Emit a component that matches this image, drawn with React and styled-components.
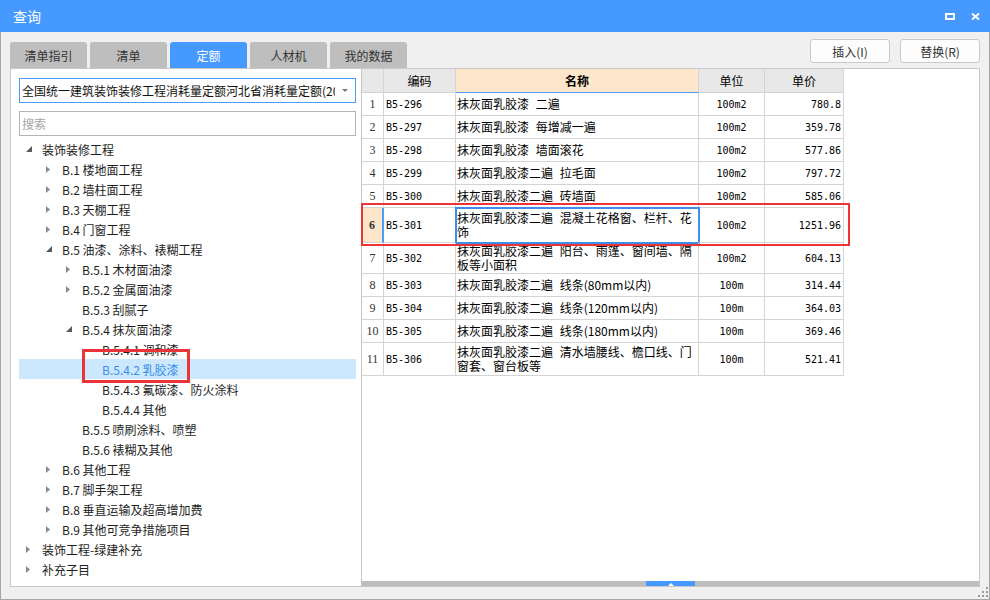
import React from 'react';
import styled, { createGlobalStyle, css } from 'styled-components';

const GlobalStyle = createGlobalStyle`
  html, body { margin: 0; padding: 0; background: #ffffff; }
  body {
    font-family: "Noto Sans CJK SC", "Microsoft YaHei", sans-serif;
    font-size: 12px;
    color: #1e1e1e;
  }
  * { box-sizing: border-box; }
`;

const CJK = `"Noto Sans CJK SC", "Microsoft YaHei", sans-serif`;
const MONO = `"DejaVu Sans Mono", "Noto Sans CJK SC", monospace`;

const Window = styled.div`
  position: relative;
  width: 990px;
  height: 600px;
  display: flex;
  flex-direction: column;
  background: #f0f0f0;
  overflow: hidden;
`;

const TitleBar = styled.div`
  flex: none;
  height: 32px;
  background: #4599ff;
  display: flex;
  align-items: center;
  padding: 0 10px 0 13px;
  color: #ffffff;
`;

const Title = styled.div`
  flex: 1;
  font-size: 14px;
  line-height: 16px;
`;

const WinButtons = styled.div`
  display: flex;
  align-items: center;
  gap: 16px;
`;

const Body = styled.div`
  flex: 1;
  min-height: 0;
  display: flex;
  flex-direction: column;
  border: 1px solid #a6a6a6;
  border-top: none;
  padding: 0 9px 12px 9px;
`;

const TopRow = styled.div`
  flex: none;
  height: 36px;
  display: flex;
  align-items: flex-start;
`;

const Tabs = styled.div`
  display: flex;
  gap: 3px;
  margin-top: 10px;
`;

const Tab = styled.div`
  width: 77px;
  height: 26px;
  border-radius: 3px 3px 0 0;
  display: flex;
  align-items: center;
  justify-content: center;
  font-size: 12px;
  background: ${(p) => (p.$active ? '#4599ff' : '#bebebe')};
  color: ${(p) => (p.$active ? '#ffffff' : '#333333')};
`;

const Actions = styled.div`
  margin-left: auto;
  margin-top: 7px;
  display: flex;
  gap: 10px;
`;

const Button = styled.div`
  width: 80px;
  height: 24px;
  border: 1px solid #c9c9c9;
  border-radius: 3px;
  background: #fdfdfd;
  display: flex;
  align-items: center;
  justify-content: center;
  font-size: 12px;
  color: #333333;
`;

const Main = styled.div`
  flex: 1;
  min-height: 0;
  display: flex;
`;

const LeftPanel = styled.div`
  flex: none;
  width: 352px;
  background: #ffffff;
  border: 1px solid #c8c8c8;
  padding: 9px 5px 0 8px;
  display: flex;
  flex-direction: column;
`;

const Select = styled.div`
  height: 25px;
  border: 1px solid #4a9cf6;
  display: flex;
  align-items: center;
  padding-left: 2px;
  margin-bottom: 8px;
`;

const SelectText = styled.div`
  flex: 1;
  overflow: hidden;
  white-space: nowrap;
  font-size: 12px;
  color: #111111;
  max-width: 314px;
`;

const SelectArrow = styled.div`
  width: 20px;
  display: flex;
  justify-content: center;
  margin-left: auto;
`;

const Search = styled.div`
  height: 25px;
  border: 1px solid #b4b4b4;
  display: flex;
  align-items: center;
  padding-left: 2px;
  color: #a6a6a6;
  font-size: 12px;
  margin-bottom: 3px;
`;

const Tree = styled.div`
  display: flex;
  flex-direction: column;
`;

const TreeRow = styled.div`
  height: 20px;
  display: flex;
  align-items: center;
  padding-left: ${(p) => p.$level * 20}px;
  background: ${(p) => (p.$selected ? '#cce8ff' : 'transparent')};
  color: ${(p) => (p.$selected ? '#3a8ee6' : '#1e1e1e')};
  font-size: 12px;
  white-space: nowrap;
`;

const Toggle = styled.div`
  width: 23px;
  height: 20px;
  flex: none;
  display: flex;
  align-items: center;
  padding-left: 7px;
`;

const RightPanel = styled.div`
  flex: 1;
  min-width: 0;
  background: #ffffff;
  border: 1px solid #c8c8c8;
  border-left: none;
  display: flex;
  flex-direction: column;
`;

const Grid = styled.div`
  display: flex;
  flex-direction: column;
  width: 482px;
`;

const GridRow = styled.div`
  display: grid;
  grid-template-columns: 22px 72px 243px 66px 79px;
  height: ${(p) => p.$h}px;
`;

const Cell = styled.div`
  border-right: 1px solid #d4d4d4;
  border-bottom: 1px solid #d4d4d4;
  display: flex;
  align-items: center;
  overflow: hidden;
  color: #000000;
`;

const HeadCell = styled(Cell)`
  justify-content: center;
  background: ${(p) => (p.$current ? '#fde6c9' : '#e8e8e8')};
  font-weight: ${(p) => (p.$current ? 700 : 400)};
  font-family: ${CJK};
  font-size: 12px;
  ${(p) =>
    p.$current &&
    css`
      border-bottom-color: #4a9cf6;
    `}
`;

const NumCell = styled(Cell)`
  justify-content: center;
  font-family: "Liberation Serif", serif;
  font-size: 12px;
  color: #333333;
  background: ${(p) => (p.$current ? '#fde6c9' : '#ffffff')};
  font-weight: ${(p) => (p.$current ? 700 : 400)};
  ${(p) =>
    p.$current &&
    css`
      border-right: 2px solid #4a9cf6;
    `}
`;

const CodeCell = styled(Cell)`
  padding-left: 2px;
  font-family: ${MONO};
  font-size: 10px;
`;

const NameCell = styled(Cell)`
  padding-left: 1px;
  font-family: ${CJK};
  font-size: 12px;
  line-height: 14px;
  word-spacing: 4px;
  ${(p) =>
    p.$selected &&
    css`
      outline: 2px solid #3d8ee6;
      outline-offset: -1px;
    `}
`;

const UnitCell = styled(Cell)`
  justify-content: center;
  font-family: ${MONO};
  font-size: 10px;
`;

const PriceCell = styled(Cell)`
  justify-content: flex-end;
  padding-right: 2px;
  font-family: ${MONO};
  font-size: 10px;
`;

const Filler = styled.div`
  flex: 1;
`;

const Splitter = styled.div`
  flex: none;
  height: 5px;
  background: #bdbdbd;
  display: flex;
  padding-left: 284px;
`;

const SplitThumb = styled.div`
  width: 49px;
  height: 5px;
  background: #4599ff;
  display: flex;
  align-items: flex-end;
  justify-content: center;
`;

const Annot = styled.div`
  position: absolute;
  left: ${(p) => p.$x}px;
  top: ${(p) => p.$y}px;
  width: ${(p) => p.$w}px;
  height: ${(p) => p.$h}px;
  border: ${(p) => p.$t}px solid #ec3338;
  pointer-events: none;
`;

const Grip = styled.svg`
  position: absolute;
  right: 2px;
  bottom: 3px;
`;

const tabs = ['清单指引', '清单', '定额', '人材机', '我的数据'];

const tree = [
  { level: 0, state: 'open', label: '装饰装修工程' },
  { level: 1, state: 'closed', label: 'B.1 楼地面工程' },
  { level: 1, state: 'closed', label: 'B.2 墙柱面工程' },
  { level: 1, state: 'closed', label: 'B.3 天棚工程' },
  { level: 1, state: 'closed', label: 'B.4 门窗工程' },
  { level: 1, state: 'open', label: 'B.5 油漆、涂料、裱糊工程' },
  { level: 2, state: 'closed', label: 'B.5.1 木材面油漆' },
  { level: 2, state: 'closed', label: 'B.5.2 金属面油漆' },
  { level: 2, state: 'leaf', label: 'B.5.3 刮腻子' },
  { level: 2, state: 'open', label: 'B.5.4 抹灰面油漆' },
  { level: 3, state: 'leaf', label: 'B.5.4.1 调和漆' },
  { level: 3, state: 'leaf', label: 'B.5.4.2 乳胶漆', selected: true },
  { level: 3, state: 'leaf', label: 'B.5.4.3 氟碳漆、防火涂料' },
  { level: 3, state: 'leaf', label: 'B.5.4.4 其他' },
  { level: 2, state: 'leaf', label: 'B.5.5 喷刷涂料、喷塑' },
  { level: 2, state: 'leaf', label: 'B.5.6 裱糊及其他' },
  { level: 1, state: 'closed', label: 'B.6 其他工程' },
  { level: 1, state: 'closed', label: 'B.7 脚手架工程' },
  { level: 1, state: 'closed', label: 'B.8 垂直运输及超高增加费' },
  { level: 1, state: 'closed', label: 'B.9 其他可竞争措施项目' },
  { level: 0, state: 'closed', label: '装饰工程-绿建补充' },
  { level: 0, state: 'closed', label: '补充子目' },
];

const rows = [
  ['1', 'B5-296', '抹灰面乳胶漆 二遍', '100m2', '780.8', 23],
  ['2', 'B5-297', '抹灰面乳胶漆 每增减一遍', '100m2', '359.78', 23],
  ['3', 'B5-298', '抹灰面乳胶漆 墙面滚花', '100m2', '577.86', 23],
  ['4', 'B5-299', '抹灰面乳胶漆二遍 拉毛面', '100m2', '797.72', 23],
  ['5', 'B5-300', '抹灰面乳胶漆二遍 砖墙面', '100m2', '585.06', 23],
  ['6', 'B5-301', '抹灰面乳胶漆二遍 混凝土花格窗、栏杆、花饰', '100m2', '1251.96', 35],
  ['7', 'B5-302', '抹灰面乳胶漆二遍 阳台、雨篷、窗间墙、隔板等小面积', '100m2', '604.13', 31],
  ['8', 'B5-303', '抹灰面乳胶漆二遍 线条(80mm以内)', '100m', '314.44', 23],
  ['9', 'B5-304', '抹灰面乳胶漆二遍 线条(120mm以内)', '100m', '364.03', 23],
  ['10', 'B5-305', '抹灰面乳胶漆二遍 线条(180mm以内)', '100m', '369.46', 23],
  ['11', 'B5-306', '抹灰面乳胶漆二遍 清水墙腰线、檐口线、门窗套、窗台板等', '100m', '521.41', 33],
];

function ToggleIcon({ state }) {
  if (state === 'open') {
    return (
      <svg width="6" height="6" viewBox="0 0 6 6">
        <polygon points="6,0 6,6 0,6" fill="#5a5a5a" />
      </svg>
    );
  }
  if (state === 'closed') {
    return (
      <svg width="4" height="7" viewBox="0 0 4 7">
        <polygon points="0,0 4,3.5 0,7" fill="#8a8a8a" />
      </svg>
    );
  }
  return null;
}

export default function App() {
  return (
    <>
      <GlobalStyle />
      <Window>
        <TitleBar>
          <Title>查询</Title>
          <WinButtons>
            <svg width="10" height="7" viewBox="0 0 10 7">
              <rect x="1" y="1" width="8" height="5" fill="none" stroke="#ffffff" strokeWidth="2" />
            </svg>
            <svg width="9" height="7" viewBox="0 0 9 7">
              <path d="M1 0.5 L8 6.5 M8 0.5 L1 6.5" stroke="#ffffff" strokeWidth="2" />
            </svg>
          </WinButtons>
        </TitleBar>
        <Body>
          <TopRow>
            <Tabs>
              {tabs.map((t) => (
                <Tab key={t} $active={t === '定额'}>
                  {t}
                </Tab>
              ))}
            </Tabs>
            <Actions>
              <Button>插入(I)</Button>
              <Button>替换(R)</Button>
            </Actions>
          </TopRow>
          <Main>
            <LeftPanel>
              <Select>
                <SelectText>全国统一建筑装饰装修工程消耗量定额河北省消耗量定额(2012)</SelectText>
                <SelectArrow>
                  <svg width="6" height="3" viewBox="0 0 6 3">
                    <polygon points="0,0 6,0 3,3" fill="#7a7a7a" />
                  </svg>
                </SelectArrow>
              </Select>
              <Search>搜索</Search>
              <Tree>
                {tree.map((n) => (
                  <TreeRow key={n.label} $level={n.level} $selected={n.selected}>
                    <Toggle>
                      <ToggleIcon state={n.state} />
                    </Toggle>
                    {n.label}
                  </TreeRow>
                ))}
              </Tree>
            </LeftPanel>
            <RightPanel>
              <Grid>
                <GridRow $h={24}>
                  <HeadCell />
                  <HeadCell>编码</HeadCell>
                  <HeadCell $current>名称</HeadCell>
                  <HeadCell>单位</HeadCell>
                  <HeadCell>单价</HeadCell>
                </GridRow>
                {rows.map((r) => {
                  const cur = r[0] === '6';
                  return (
                    <GridRow key={r[0]} $h={r[5]}>
                      <NumCell $current={cur}>{r[0]}</NumCell>
                      <CodeCell>{r[1]}</CodeCell>
                      <NameCell $selected={cur}>{r[2]}</NameCell>
                      <UnitCell>{r[3]}</UnitCell>
                      <PriceCell>{r[4]}</PriceCell>
                    </GridRow>
                  );
                })}
              </Grid>
              <Filler />
              <Splitter>
                <SplitThumb>
                  <svg width="6" height="3" viewBox="0 0 6 3">
                    <polygon points="0,3 6,3 3,0" fill="#ffffff" />
                  </svg>
                </SplitThumb>
              </Splitter>
            </RightPanel>
          </Main>
        </Body>
        <Annot $x={361} $y={203} $w={489} $h={43} $t={2} />
        <Annot $x={82} $y={349} $w={108} $h={34} $t={3} />
        <Grip width="10" height="10" viewBox="0 0 10 10">
          <rect x="8" y="0" width="2" height="2" fill="#9a9a9a" />
          <rect x="4" y="4" width="2" height="2" fill="#9a9a9a" />
          <rect x="8" y="4" width="2" height="2" fill="#9a9a9a" />
          <rect x="0" y="8" width="2" height="2" fill="#9a9a9a" />
          <rect x="4" y="8" width="2" height="2" fill="#9a9a9a" />
          <rect x="8" y="8" width="2" height="2" fill="#9a9a9a" />
        </Grip>
      </Window>
    </>
  );
}
